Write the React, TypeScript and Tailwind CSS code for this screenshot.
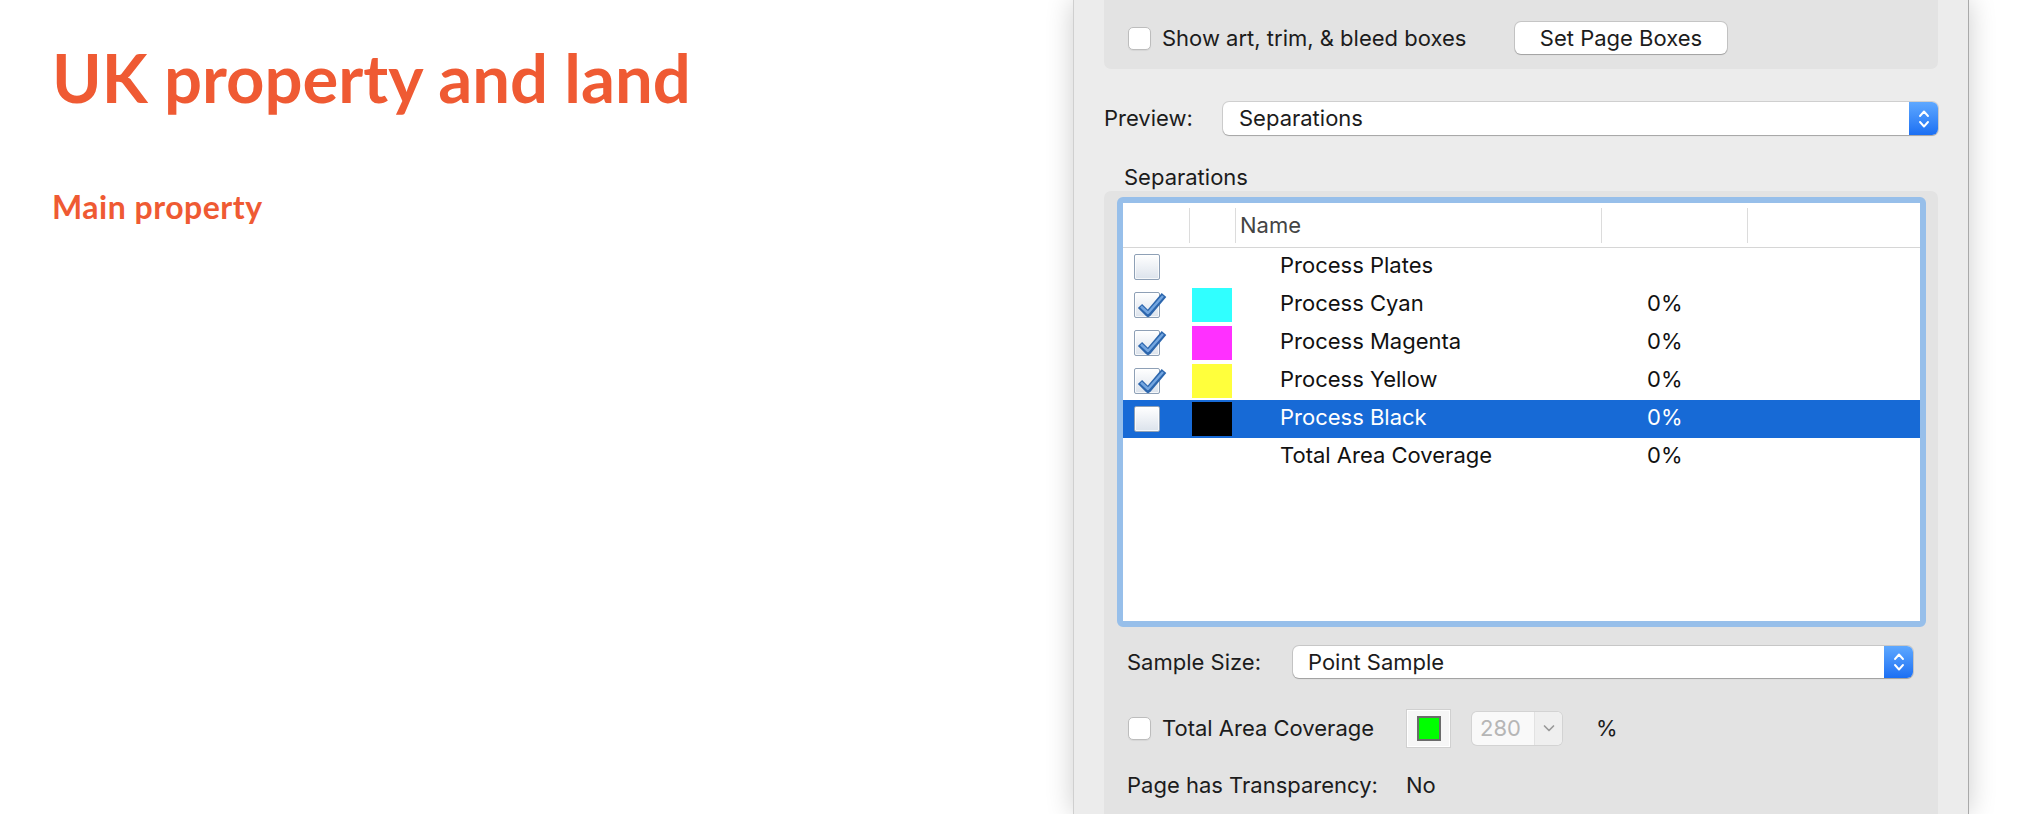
import React from "react";

// separation rows shown in the table
const plates = [
  { name: "Process Plates", swatch: "", box: "empty", pct: "" },
  { name: "Process Cyan", swatch: "bg-[#30ffff]", box: "checked", pct: "0%" },
  { name: "Process Magenta", swatch: "bg-[#ff30ff]", box: "checked", pct: "0%" },
  { name: "Process Yellow", swatch: "bg-[#ffff3c]", box: "checked", pct: "0%" },
  { name: "Process Black", swatch: "bg-black", box: "empty", pct: "0%", selected: true },
  { name: "Total Area Coverage", swatch: "", box: "none", pct: "0%" },
];

const MacCheckbox = () => (
  <span className="block h-[23px] w-[23px] shrink-0 rounded-[5px] border border-[#bdbdbd] bg-white shadow-[0_1px_1px_rgba(0,0,0,0.06)]" />
);

const Stepper = () => (
  <span className="flex w-[29px] shrink-0 items-center justify-center rounded-r-[6px] bg-linear-to-b from-[#5ea8ff] to-[#1b6ff3]">
    <svg width="14" height="22" viewBox="0 0 14 22" fill="none">
      <path d="M3 8 L7 3.5 L11 8" stroke="white" strokeWidth="1.9" strokeLinecap="round" strokeLinejoin="round" />
      <path d="M3 14 L7 18.5 L11 14" stroke="white" strokeWidth="1.9" strokeLinecap="round" strokeLinejoin="round" />
    </svg>
  </span>
);

const TableCheckbox = ({ checked }: { checked: boolean }) => (
  <span className="relative block h-[26px] w-[26px] rounded-[2px] border border-[#8ea0b6] bg-linear-to-b from-white to-[#dce3ec] shadow-[inset_0_0_0_1px_rgba(255,255,255,0.7)]">
    {checked && (
      <svg className="absolute -top-[2px] left-[2px]" width="30" height="28" viewBox="0 0 30 28" fill="none">
        <path d="M3 15 L11 23 L27 4" stroke="#2c66ad" strokeWidth="6" strokeLinejoin="round" />
        <path d="M4 15.5 L11 22 L26 5" stroke="#74a6e0" strokeWidth="2.4" strokeLinejoin="round" />
      </svg>
    )}
  </span>
);

const App = () => {
  return (
    <div className="flex h-[814px] w-[2030px] overflow-hidden bg-white font-['Inter','Liberation_Sans',sans-serif] text-[22px] text-[#1c1c1c]">
      {/* left page */}
      <div className="w-[1073px] shrink-0 pl-[52px] pt-[44px] font-['Lato','Open_Sans',sans-serif] font-bold text-[#ef5a33]">
        <h1 className="text-[67px] leading-none">UK property and land</h1>
        <h2 className="mt-[80px] text-[32px] leading-none tracking-[0.5px]">Main property</h2>
      </div>

      {/* output preview window */}
      <div className="relative z-10 flex w-[896px] shrink-0 flex-col border-x border-l-[#cfcfcf] border-r-[#a9a9a9] bg-[#ececec] px-[30px] shadow-[0_0_26px_rgba(0,0,0,0.2)]">
        <div className="h-[69px] shrink-0 rounded-b-[7px] bg-[#e3e3e3] pl-[24px] pt-[22px]">
          <div className="flex h-[32px] items-center">
            <MacCheckbox />
            <span className="ml-[11px] w-[353px]">Show art, trim, &amp; bleed boxes</span>
            <button className="h-[32px] w-[212px] rounded-[6px] bg-white shadow-[0_0_0_1px_rgba(0,0,0,0.13),0_1px_1px_rgba(0,0,0,0.18)]">
              Set Page Boxes
            </button>
          </div>
        </div>

        <div className="mt-[33px] flex h-[33px] items-center">
          <span className="w-[119px] shrink-0">Preview:</span>
          <div className="flex h-[33px] flex-1 rounded-[6px] bg-white shadow-[0_0_0_1px_rgba(0,0,0,0.12),0_1px_1px_rgba(0,0,0,0.2)]">
            <span className="flex flex-1 items-center pl-[16px]">Separations</span>
            <Stepper />
          </div>
        </div>

        <div className="mt-[29px] h-[26px] pl-[20px] leading-[26px]">Separations</div>

        <div className="mt-[1px] flex-1 rounded-t-[7px] bg-[#e3e3e3] pt-[6px]">
          <div className="pl-[13px] pr-[12px]">
            <div className="h-[430px] rounded-[6px] border-[6px] border-[#97bfea] bg-white">
              {/* header */}
              <div className="flex h-[45px] items-center border-b border-[#d6d6d6] text-[#444]">
                <span className="w-[66px]" />
                <span className="h-[35px] w-px bg-[#dcdcdc]" />
                <span className="w-[45px]" />
                <span className="h-[35px] w-px bg-[#dcdcdc]" />
                <span className="w-[365px] pl-[4px]">Name</span>
                <span className="h-[35px] w-px bg-[#dcdcdc]" />
                <span className="w-[145px]" />
                <span className="h-[35px] w-px bg-[#dcdcdc]" />
              </div>
              {/* rows */}
              {plates.map((p) => (
                <div
                  key={p.name}
                  className={`flex h-[38px] items-center ${p.selected ? "bg-[#176ad6] text-white" : "text-[#111]"}`}
                >
                  <span className="w-[69px] shrink-0 pl-[11px]">
                    {p.box !== "none" && <TableCheckbox checked={p.box === "checked"} />}
                  </span>
                  <span className="w-[88px] shrink-0">
                    {p.swatch && <span className={`block h-[34px] w-[40px] ${p.swatch}`} />}
                  </span>
                  <span className="mb-[4px] w-[367px] shrink-0">{p.name}</span>
                  <span className="mb-[4px]">{p.pct}</span>
                </div>
              ))}
            </div>
          </div>

          <div className="pl-[23px] pr-[25px]">
            <div className="mt-[19px] flex h-[32px] items-center">
              <span className="w-[166px] shrink-0">Sample Size:</span>
              <div className="flex h-[32px] flex-1 rounded-[6px] bg-white shadow-[0_0_0_1px_rgba(0,0,0,0.12),0_1px_1px_rgba(0,0,0,0.2)]">
                <span className="flex flex-1 items-center pl-[15px]">Point Sample</span>
                <Stepper />
              </div>
            </div>

            <div className="mt-[30px] flex h-[40px] items-center">
              <span className="ml-[1px]">
                <MacCheckbox />
              </span>
              <span className="ml-[11px] w-[244px] shrink-0">Total Area Coverage</span>
              <span className="flex h-[39px] w-[45px] items-center justify-center border border-[#d0d0d0] bg-[#f6f6f6] shadow-[inset_0_0_0_1px_white]">
                <span className="block h-[25px] w-[24px] border-2 border-[#6b6b6b] bg-[#00ff00]" />
              </span>
              <span className="ml-[21px] flex h-[33px] w-[90px] rounded-[5px] bg-[#f9f9f9] shadow-[0_0_0_1px_rgba(0,0,0,0.07)]">
                <span className="flex w-[62px] items-center pl-[8px] text-[#b6b6b6]">280</span>
                <span className="flex flex-1 items-center justify-center rounded-r-[5px] border-l border-[#e2e2e2] bg-[#efefef]">
                  <svg width="14" height="9" viewBox="0 0 14 9" fill="none">
                    <path d="M2.5 2 L7 6.5 L11.5 2" stroke="#9a9a9a" strokeWidth="1.7" strokeLinecap="round" strokeLinejoin="round" />
                  </svg>
                </span>
              </span>
              <span className="ml-[34px]">%</span>
            </div>

            <div className="mt-[24px] flex h-[26px] items-center">
              <span className="w-[279px] shrink-0">Page has Transparency:</span>
              <span>No</span>
            </div>
          </div>
        </div>
      </div>

      <div className="flex-1 bg-white" />
    </div>
  );
};

export default App;
